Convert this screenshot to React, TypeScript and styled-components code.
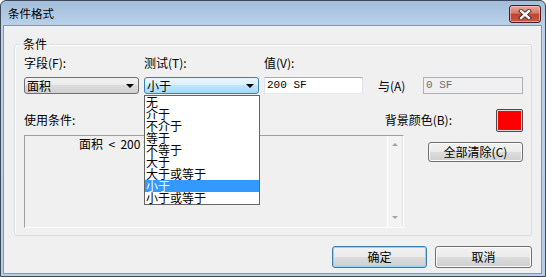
import React from "react";
import styled, { createGlobalStyle } from "styled-components";

const Global = createGlobalStyle`
  html, body { margin: 0; padding: 0; background: #ffffff; }
  body { font-family: "Noto Sans CJK SC", "Noto Sans", sans-serif; font-size: 12px; color: #000; }
  * { box-sizing: border-box; }
`;

const Window = styled.div`
  width: 546px;
  height: 277px;
  display: flex;
  flex-direction: column;
  border: 1px solid #3d4a59;
  border-radius: 6px 6px 0 0;
  background: linear-gradient(#a3bdda, #bcd2eb 26px, #b6cde7);
  padding: 0 3px 2px 2px;
  overflow: hidden;
`;

const TitleBar = styled.div`
  height: 24px;
  flex: none;
  display: flex;
  align-items: flex-start;
  justify-content: space-between;
  padding: 4px 1px 0 5px;
`;

const Title = styled.span`
  font-size: 11.5px;
  line-height: 16px;
  color: #000;
`;

const CloseButton = styled.div`
  width: 32px;
  height: 18px;
  border: 1px solid #4b1f1b;
  border-radius: 3px;
  background: linear-gradient(#e9a99b, #d47a68 45%, #c0442f 50%, #c8584a);
  box-shadow: inset 0 0 0 1px rgba(255, 210, 200, 0.55);
  display: flex;
  align-items: center;
  justify-content: center;
`;

const Client = styled.div`
  flex: 1;
  background: #f0f0f0;
  border: 1px solid #7f98b6;
  display: flex;
  flex-direction: column;
  padding: 18px 10px 0 10px;
`;

const GroupBox = styled.div`
  position: relative;
  width: 518px;
  height: 192px;
  border: 1px solid #d5dfe5;
  border-radius: 3px;
  box-shadow: inset 1px 1px 0 #ffffff;
  padding: 11px 8px 0 9px;
  display: flex;
  flex-direction: column;
`;

const Legend = styled.span`
  position: absolute;
  left: 6px;
  top: -9px;
  padding: 0 2px;
  background: #f0f0f0;
  line-height: 16px;
`;

const FieldGrid = styled.div`
  display: grid;
  grid-template-columns: 115px 115px 99px 50px 100px;
  column-gap: 5px;
  row-gap: 7px;
  grid-template-rows: 14px 17px;
  align-items: center;
`;

const Label = styled.span<{ $indent?: number }>`
  line-height: 14px;
  white-space: nowrap;
  padding-left: ${(p) => p.$indent ?? 0}px;
`;

const ComboWrap = styled.div`
  position: relative;
  height: 17px;
`;

const Combo = styled.div<{ $focused?: boolean }>`
  height: 17px;
  border: 1px solid ${(p) => (p.$focused ? "#3c7fb1" : "#707070")};
  border-radius: 3px;
  background: ${(p) =>
    p.$focused
      ? "linear-gradient(#eaf6fd, #d9f0fc 50%, #bee6fd 50%, #a7d9f5)"
      : "linear-gradient(#f2f2f2, #ebebeb 50%, #dddddd 50%, #cfcfcf)"};
  display: flex;
  align-items: center;
  justify-content: space-between;
  padding: 0 4px 0 2px;
  line-height: 14px;
`;

const Arrow = styled.span`
  width: 0;
  height: 0;
  border-left: 4px solid transparent;
  border-right: 4px solid transparent;
  border-top: 4px solid #000;
`;

const DropList = styled.ul`
  position: absolute;
  left: 0;
  top: 18px;
  width: 116px;
  margin: 0;
  padding: 0;
  list-style: none;
  background: #ffffff;
  border: 1px solid #646464;
  z-index: 5;
`;

const DropItem = styled.li<{ $selected?: boolean }>`
  height: 12px;
  line-height: 12px;
  font-size: 12px;
  padding-left: 1px;
  overflow: hidden;
  white-space: nowrap;
  background: ${(p) => (p.$selected ? "#3399ff" : "transparent")};
  color: ${(p) => (p.$selected ? "#ffffff" : "#000000")};
`;

const TextInput = styled.div<{ $disabled?: boolean }>`
  height: 17px;
  border: 1px solid;
  border-color: ${(p) =>
    p.$disabled ? "#adb2b5" : "#abadb3 #dbdfe6 #e3e9ef #e2e3ea"};
  background: ${(p) => (p.$disabled ? "#f0f0f0" : "#ffffff")};
  color: ${(p) => (p.$disabled ? "#6d6d6d" : "#000000")};
  font-family: "Liberation Mono", monospace;
  font-size: 11px;
  line-height: 15px;
  padding-left: 2px;
`;

const MidRow = styled.div`
  display: flex;
  align-items: center;
  justify-content: space-between;
  height: 22px;
  margin-top: 15px;
`;

const SwatchGroup = styled.div`
  display: flex;
  align-items: center;
  gap: 44px;
`;

const Swatch = styled.div<{ $color: string }>`
  width: 27px;
  height: 23px;
  border: 1px solid #4a4a4a;
  border-radius: 2px;
  padding: 1px;
  background: #dcdcdc;
  &::after {
    content: "";
    display: block;
    width: 100%;
    height: 100%;
    background: ${(p) => p.$color};
  }
`;

const BottomArea = styled.div`
  display: flex;
  margin-top: 4px;
  gap: 24px;
`;

const ListBox = styled.div`
  width: 380px;
  height: 93px;
  border: 1px solid;
  border-color: #a0a0a0 #ffffff #ffffff #a0a0a0;
  display: flex;
`;

const ListContent = styled.div`
  flex: 1;
  padding: 1px 0 0 54px;
  line-height: 14px;
  white-space: pre;
`;

const ScrollBar = styled.div`
  width: 16px;
  border-left: 1px solid #ffffff;
  border-right: 1px solid #e3e3e3;
  background: #f3f3f3;
  display: flex;
  flex-direction: column;
  justify-content: space-between;
  align-items: center;
  padding: 7px 0 8px;
`;

const ScrollArrow = styled.span<{ $down?: boolean }>`
  width: 0;
  height: 0;
  border-left: 3px solid transparent;
  border-right: 3px solid transparent;
  ${(p) =>
    p.$down ? "border-top: 3px solid #a3a3a3;" : "border-bottom: 3px solid #a3a3a3;"}
`;

const RightColumn = styled.div`
  padding-top: 7px;
`;

const Button = styled.div<{ $w: number; $h: number; $default?: boolean }>`
  width: ${(p) => p.$w}px;
  height: ${(p) => p.$h}px;
  border: 1px solid ${(p) => (p.$default ? "#3c7fb1" : "#707070")};
  border-radius: 3px;
  background: linear-gradient(#f2f2f2, #ebebeb 50%, #dddddd 50%, #cfcfcf);
  box-shadow: ${(p) =>
    p.$default ? "inset 0 0 0 1px #8fd1f5" : "inset 0 0 0 1px #fbfbfb"};
  display: flex;
  align-items: center;
  justify-content: center;
  line-height: 14px;
  white-space: nowrap;
`;

const ButtonRow = styled.div`
  display: flex;
  justify-content: flex-end;
  gap: 8px;
  width: 518px;
  margin-top: 10px;
`;

const items = ["无", "介于", "不介于", "等于", "不等于", "大于", "大于或等于", "小于", "小于或等于"];

export default function App() {
  return (
    <>
      <Global />
      <Window>
        <TitleBar>
          <Title>条件格式</Title>
          <CloseButton>
            <svg width="14" height="11" viewBox="0 0 14 11">
              <path d="M3 2 L11 9 M11 2 L3 9" stroke="#3a1a16" strokeWidth="4" strokeLinecap="square" />
              <path d="M3 2 L11 9 M11 2 L3 9" stroke="#ffffff" strokeWidth="2.4" strokeLinecap="square" />
            </svg>
          </CloseButton>
        </TitleBar>
        <Client>
          <GroupBox>
            <Legend>条件</Legend>
            <FieldGrid>
              <Label>字段(F):</Label>
              <Label>测试(T):</Label>
              <Label>值(V):</Label>
              <span />
              <span />
              <Combo>
                <span>面积</span>
                <Arrow />
              </Combo>
              <ComboWrap>
                <Combo $focused>
                  <span>小于</span>
                  <Arrow />
                </Combo>
                <DropList>
                  {items.map((t) => (
                    <DropItem key={t} $selected={t === "小于"}>
                      {t}
                    </DropItem>
                  ))}
                </DropList>
              </ComboWrap>
              <TextInput>200 SF</TextInput>
              <Label $indent={10}>与(A)</Label>
              <TextInput $disabled>0 SF</TextInput>
            </FieldGrid>
            <MidRow>
              <Label>使用条件:</Label>
              <SwatchGroup>
                <Label>背景颜色(B):</Label>
                <Swatch $color="#ff0000" />
              </SwatchGroup>
            </MidRow>
            <BottomArea>
              <ListBox>
                <ListContent>{"面积  <  200 SF"}</ListContent>
                <ScrollBar>
                  <ScrollArrow />
                  <ScrollArrow $down />
                </ScrollBar>
              </ListBox>
              <RightColumn>
                <Button $w={95} $h={20}>全部清除(C)</Button>
              </RightColumn>
            </BottomArea>
          </GroupBox>
          <ButtonRow>
            <Button $w={95} $h={22} $default>确定</Button>
            <Button $w={97} $h={22}>取消</Button>
          </ButtonRow>
        </Client>
      </Window>
    </>
  );
}
